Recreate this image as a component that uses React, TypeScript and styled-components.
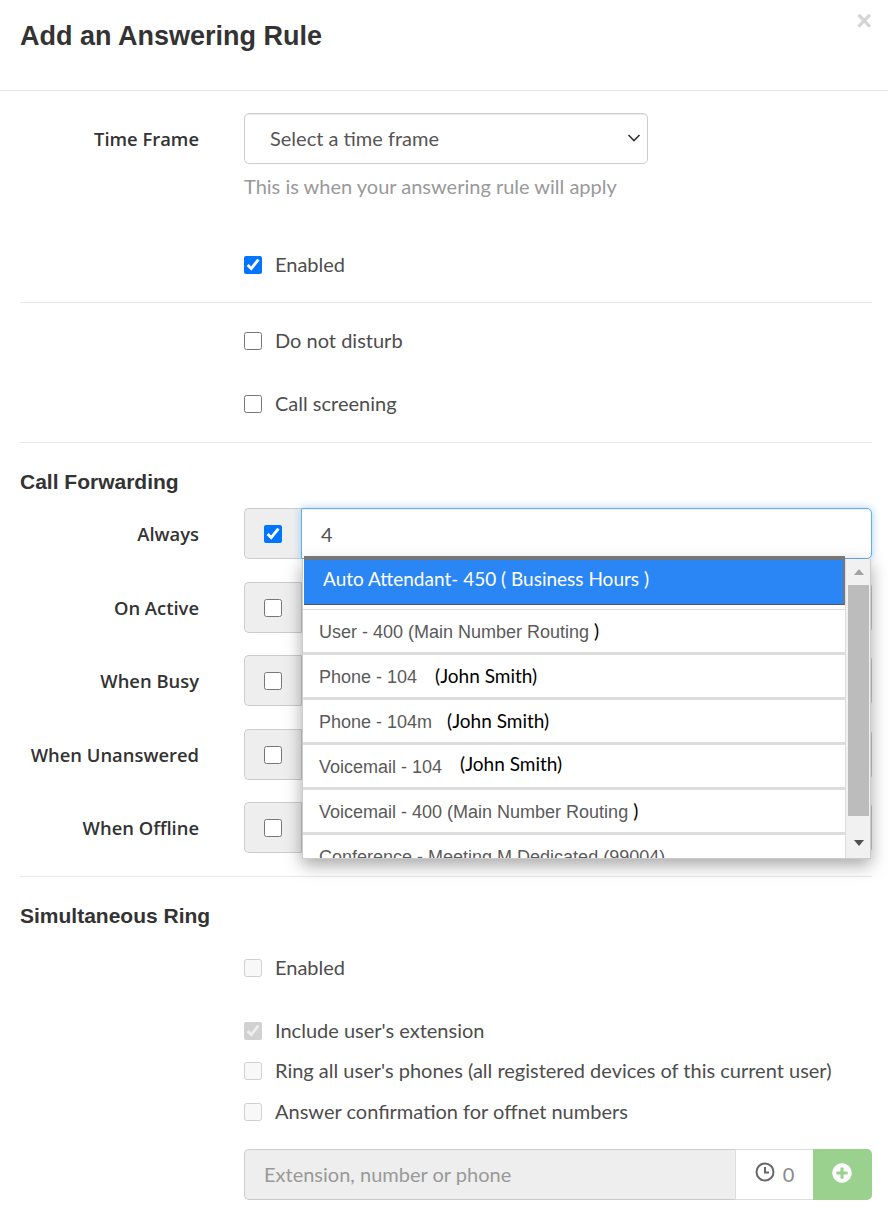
import styled, { createGlobalStyle } from "styled-components";
import { FaPlusCircle } from "react-icons/fa";

const BODY_FONT = `Lato, "Open Sans", "Liberation Sans", sans-serif`;

const GlobalStyle = createGlobalStyle`
  html, body {
    margin: 0;
    padding: 0;
    background: #fff;
  }
  * {
    box-sizing: border-box;
  }
`;

const Modal = styled.div`
  width: 888px;
  height: 1208px;
  overflow: hidden;
  background: #fff;
  font-family: ${BODY_FONT};
  font-size: 20px;
  color: #4d4d4d;
`;

const Header = styled.header`
  position: relative;
  height: 91px;
  padding: 18px 20px 0;
  border-bottom: 1px solid #e5e5e5;
`;

const Title = styled.h1`
  margin: 0;
  font-family: "Liberation Sans", Arial, sans-serif;
  font-size: 27px;
  line-height: 36px;
  font-weight: 700;
  color: #333;
`;

const Close = styled.span`
  position: absolute;
  top: 5px;
  right: 16px;
  font-family: "Liberation Sans", Arial, sans-serif;
  font-size: 27px;
  line-height: 32px;
  font-weight: 700;
  color: #d4d4d4;
`;

const Body = styled.div`
  padding: 0 16px 8px 20px;
`;

const Row = styled.div<{ $mt: number }>`
  display: grid;
  grid-template-columns: 179px 1fr;
  column-gap: 45px;
  align-items: center;
  margin-top: ${(p) => p.$mt}px;
`;

const Label = styled.label`
  text-align: right;
  font-family: "Open Sans", sans-serif;
  font-size: 18.4px;
  font-weight: 600;
  color: #333;
`;

const Control = styled.div`
  grid-column: 2;
`;

const SelectWrap = styled.div`
  position: relative;
  width: 404px;
  color: #333;
  svg {
    position: absolute;
    top: 20px;
    right: 7px;
    pointer-events: none;
  }
`;

const Select = styled.select`
  display: block;
  width: 100%;
  height: 51px;
  padding: 0 25px 2px;
  appearance: none;
  background-color: #fff;
  border: 1px solid #ccc;
  border-radius: 5px;
  box-shadow: inset 0 1px 1px rgba(0, 0, 0, 0.075);
  font: inherit;
  color: #555;
`;

const Help = styled.p`
  margin: 9px 0 0;
  line-height: 27px;
  color: #999;
`;

const Box = styled.input.attrs({ type: "checkbox" })`
  flex: none;
  width: 18px;
  height: 18px;
  margin: 0;
`;

const Check = styled.label<{ $mt: number }>`
  display: flex;
  align-items: center;
  gap: 13px;
  height: 26px;
  margin-top: ${(p) => p.$mt}px;
  padding-bottom: 2px;
  color: #4d4d4d;
  ${Box} {
    margin-bottom: -2px;
  }
`;

const Divider = styled.hr<{ $mt: number }>`
  height: 1px;
  margin: ${(p) => p.$mt}px 0 0;
  border: 0;
  background: #e8e8e8;
`;

const Heading = styled.h2<{ $mt: number }>`
  margin: ${(p) => p.$mt}px 0 0;
  font-family: "Liberation Sans", Arial, sans-serif;
  font-size: 21px;
  line-height: 24px;
  font-weight: 700;
  color: #333;
`;

const Group = styled.div`
  position: relative;
  display: flex;
  height: 51px;
`;

const Addon = styled.span`
  display: flex;
  flex: none;
  align-items: center;
  justify-content: center;
  width: 57px;
  background: #eee;
  border: 1px solid #ccc;
  border-right: 0;
  border-radius: 5px 0 0 5px;
`;

const TextInput = styled.input<{ $focused?: boolean }>`
  flex: 1;
  min-width: 0;
  padding: 0 19px;
  background: #fff;
  border: 1px solid ${(p) => (p.$focused ? "#66afe9" : "#ccc")};
  border-radius: 0 5px 5px 0;
  box-shadow: ${(p) =>
    p.$focused
      ? "inset 0 1px 1px rgba(0,0,0,.075), 0 0 8px rgba(102,175,233,.6)"
      : "inset 0 1px 1px rgba(0,0,0,.075)"};
  font: inherit;
  color: #555;
  outline: none;
`;

const Dropdown = styled.div`
  position: absolute;
  z-index: 10;
  top: 51px;
  left: 58px;
  display: flex;
  width: 569px;
  height: 300px;
  background: #fff;
  border: 1px solid #ccc;
  border-top: 0;
  box-shadow: 0 6px 16px rgba(0, 0, 0, 0.35);
`;

const List = styled.ul`
  flex: 1;
  min-width: 0;
  margin: 0;
  padding: 0;
  list-style: none;
`;

const SelectedItem = styled.li`
  height: 49px;
  margin: -3px 0 4px 1px;
  padding: 4px 0 0 19px;
  background: #2b86f5;
  border-top: 4px solid #777;
  border-right: 2px solid #777;
  border-bottom: 1px solid #555;
  font-size: 19px;
  line-height: 30px;
  color: #fff;
`;

const Item = styled.li<{ $clipped?: boolean }>`
  height: ${(p) => (p.$clipped ? "24px" : "45px")};
  padding-left: 16px;
  overflow: hidden;
  background: #fff;
  border-top: 1px solid #ddd;
  border-bottom: ${(p) => (p.$clipped ? "0" : "2px solid #ddd")};
  font-family: "Liberation Sans", Arial, sans-serif;
  font-size: 18px;
  line-height: 44px;
  color: #5a5a5a;
`;

const Person = styled.span<{ $gap: number; $raise?: number }>`
  margin-left: ${(p) => p.$gap}px;
  font-family: Lato, sans-serif;
  font-size: 19px;
  line-height: 1;
  vertical-align: ${(p) => p.$raise ?? 0}px;
  color: #000;
`;

const Scrollbar = styled.div`
  display: flex;
  flex: none;
  flex-direction: column;
  align-items: center;
  width: 25px;
  padding: 0 1px 0 2px;
  background: #f1f1f1;
  border-left: 1px solid #ddd;
`;

const Arrow = styled.span<{ $down?: boolean }>`
  flex: none;
  width: 0;
  height: 0;
  margin: ${(p) => (p.$down ? "24px 0 0" : "10px 0 10px")};
  border-left: 5px solid transparent;
  border-right: 5px solid transparent;
  border-${(p) => (p.$down ? "top" : "bottom")}: 6px solid
    ${(p) => (p.$down ? "#505050" : "#a3a3a3")};
`;

const Thumb = styled.div`
  width: 100%;
  height: 231px;
  background: #bcbcbc;
`;

const DisabledInput = styled.input`
  flex: 1;
  min-width: 0;
  padding: 0 19px 2px;
  background: #eee;
  border: 1px solid #ccc;
  border-right: 0;
  border-radius: 5px 0 0 5px;
  font: inherit;
  &::placeholder {
    color: #999;
    opacity: 1;
  }
`;

const Timer = styled.span`
  display: flex;
  flex: none;
  align-items: center;
  justify-content: center;
  gap: 8px;
  width: 78px;
  padding-bottom: 2px;
  background: #fff;
  border: 1px solid #ddd;
  border-right: 0;
  color: #888;
  svg {
    margin-top: -4px;
    color: #666;
  }
`;

const AddButton = styled.button`
  display: flex;
  flex: none;
  align-items: center;
  justify-content: center;
  width: 59px;
  padding: 0 2px 4px 0;
  background: #9bd18f;
  border: 0;
  border-radius: 0 5px 5px 0;
  color: #fff;
`;

type ForwardRowProps = {
  label: string;
  top: number;
  checked?: boolean;
  focused?: boolean;
  children?: React.ReactNode;
};

const ForwardRow = ({ label, top, checked, focused, children }: ForwardRowProps) => (
  <Row $mt={top}>
    <Label>{label}</Label>
    <Group>
      <Addon>
        <Box defaultChecked={checked} />
      </Addon>
      <TextInput $focused={focused} defaultValue={focused ? "4" : ""} />
      {children}
    </Group>
  </Row>
);

export default function App() {
  return (
    <>
      <GlobalStyle />
      <Modal>
        <Header>
          <Title>Add an Answering Rule</Title>
          <Close>×</Close>
        </Header>
        <Body>
          <Row $mt={22}>
            <Label>Time Frame</Label>
            <SelectWrap>
              <Select defaultValue="">
                <option value="">Select a time frame</option>
              </Select>
              <svg width="14" height="10" viewBox="0 0 14 10" fill="none" stroke="currentColor" strokeWidth="1.6">
                <path d="M1.5 2 7 7.5 12.5 2" />
              </svg>
            </SelectWrap>
          </Row>
          <Row $mt={0}>
            <Control>
              <Help>This is when your answering rule will apply</Help>
              <Check $mt={52}>
                <Box defaultChecked />
                Enabled
              </Check>
            </Control>
          </Row>
          <Divider $mt={24} />
          <Row $mt={0}>
            <Control>
              <Check $mt={25}>
                <Box />
                Do not disturb
              </Check>
              <Check $mt={37}>
                <Box />
                Call screening
              </Check>
            </Control>
          </Row>
          <Divider $mt={25} />
          <Heading $mt={27}>Call Forwarding</Heading>
          <ForwardRow label="Always" top={14} checked focused>
            <Dropdown>
              <List>
                <SelectedItem>Auto Attendant- 450 ( Business Hours )</SelectedItem>
                <Item>User - 400 (Main Number Routing <Person $gap={0}>)</Person></Item>
                <Item>Phone - 104<Person $gap={18}>(John Smith)</Person></Item>
                <Item>Phone - 104m<Person $gap={15}>(John Smith)</Person></Item>
                <Item>Voicemail - 104<Person $gap={18} $raise={2}>(John Smith)</Person></Item>
                <Item>Voicemail - 400 (Main Number Routing <Person $gap={0}>)</Person></Item>
                <Item $clipped>Conference - Meeting M Dedicated (99004)</Item>
              </List>
              <Scrollbar>
                <Arrow />
                <Thumb />
                <Arrow $down />
              </Scrollbar>
            </Dropdown>
          </ForwardRow>
          <ForwardRow label="On Active" top={23} />
          <ForwardRow label="When Busy" top={22} />
          <ForwardRow label="When Unanswered" top={23} />
          <ForwardRow label="When Offline" top={22} />
          <Divider $mt={23} />
          <Heading $mt={27}>Simultaneous Ring</Heading>
          <Row $mt={0}>
            <Control>
              <Check $mt={27}>
                <Box disabled />
                Enabled
              </Check>
              <Check $mt={37}>
                <Box disabled defaultChecked />
                Include user's extension
              </Check>
              <Check $mt={14}>
                <Box disabled />
                Ring all user's phones (all registered devices of this current user)
              </Check>
              <Check $mt={15}>
                <Box disabled />
                Answer confirmation for offnet numbers
              </Check>
            </Control>
          </Row>
          <Row $mt={24}>
            <Control>
              <Group>
                <DisabledInput disabled placeholder="Extension, number or phone" />
                <Timer>
                  <svg width="20" height="20" viewBox="0 0 20 20" fill="none" stroke="currentColor" strokeWidth="2">
                    <circle cx="10" cy="10" r="8.5" />
                    <path d="M10 5v5.5h4" />
                  </svg>
                  0
                </Timer>
                <AddButton>
                  <FaPlusCircle size={20} />
                </AddButton>
              </Group>
            </Control>
          </Row>
        </Body>
      </Modal>
    </>
  );
}
